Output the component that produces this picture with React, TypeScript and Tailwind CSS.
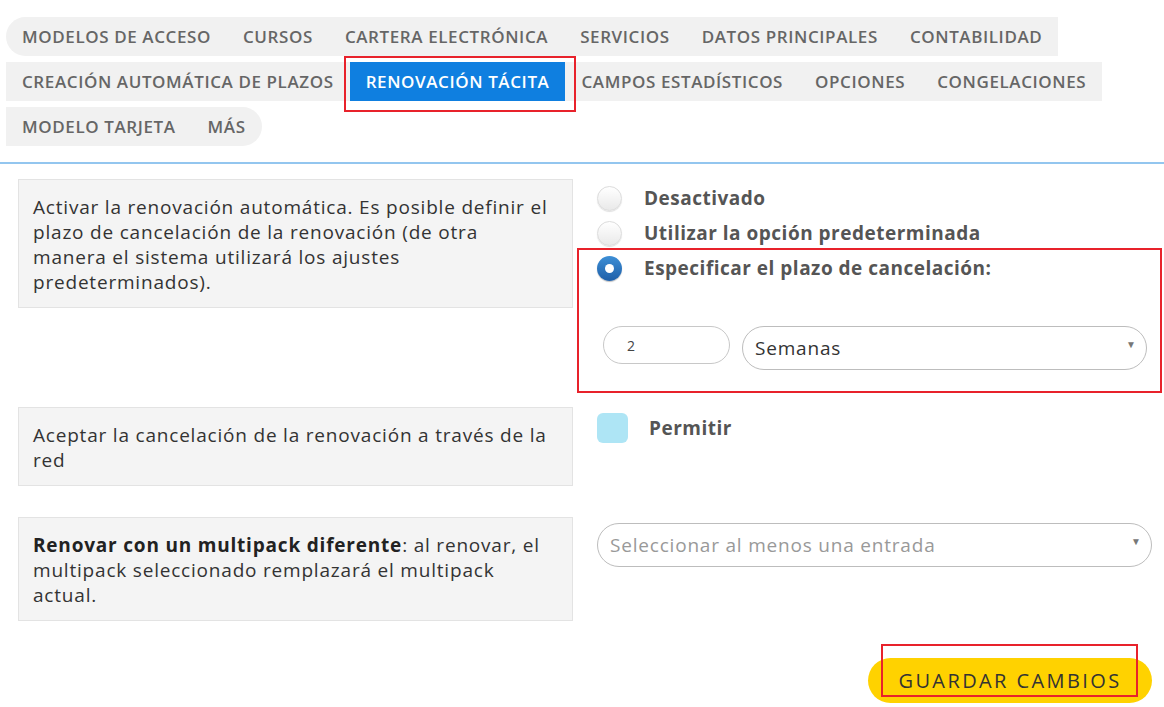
import React from 'react'

const font = { fontFamily: '"Open Sans", "Liberation Sans", sans-serif' }

const rows: { label: string; active?: boolean }[][] = [
  [{ label: 'Modelos de acceso' }, { label: 'Cursos' }, { label: 'Cartera electrónica' }, { label: 'Servicios' }, { label: 'Datos principales' }, { label: 'Contabilidad' }],
  [{ label: 'Creación automática de plazos' }, { label: 'Renovación tácita', active: true }, { label: 'Campos estadísticos' }, { label: 'Opciones' }, { label: 'Congelaciones' }],
  [{ label: 'Modelo tarjeta' }, { label: 'Más' }],
]

function Radio({ checked }: { checked?: boolean }) {
  if (checked) {
    return (
      <span className="flex h-[25px] w-[25px] shrink-0 items-center justify-center rounded-full bg-gradient-to-b from-[#3d8fd6] to-[#1f5fa8] shadow-[0_1px_1px_rgba(0,0,0,0.25)]">
        <span className="h-[9px] w-[9px] rounded-full bg-white" />
      </span>
    )
  }
  return <span className="block h-[25px] w-[25px] shrink-0 rounded-full border border-[#dcdcdc] bg-gradient-to-b from-white to-[#e9e9e9] shadow-[0_1px_1px_rgba(0,0,0,0.12)]" />
}

function Caret() {
  return <span className="absolute right-[10px] top-[10px] text-[10px] tracking-normal text-[#777]">▼</span>
}

const box = 'border border-[#e3e3e3] bg-[#f4f4f4] pl-[14px] pr-[22px] pb-[12px] pt-[15px] text-[19px] leading-[25px] tracking-[0.8px] text-[#333]'
const option = 'flex items-center gap-[22px] text-[19px] font-bold leading-[26px] tracking-[0.5px] text-[#555]'

export default function App() {
  return (
    <div className="relative h-[707px] w-[1164px] overflow-hidden bg-white" style={font}>
      {/* tabs */}
      <div className="flex flex-col gap-[6px] pl-[6px] pt-[17px]">
        {rows.map((row, ri) => (
          <div key={ri} className="flex">
            <div
              className={
                'flex h-[39px] items-stretch bg-[#f1f1f1] ' +
                (ri === 0 ? 'rounded-l-[20px]' : '') +
                (ri === 2 ? 'rounded-r-[20px]' : '')
              }
            >
              {row.map((t) => (
                <div
                  key={t.label}
                  className={
                    'flex items-center px-4 text-[17px] font-semibold uppercase tracking-[0.6px] ' +
                    (t.active ? 'bg-[#0f7fe0] text-white' : 'text-[#666]')
                  }
                >
                  {t.label}
                </div>
              ))}
            </div>
          </div>
        ))}
      </div>

      <div className="mt-[16px] h-[2px] w-full bg-[#93c6ef]" />

      <div className="pl-[18px] pr-[12px]">
        {/* row 1 */}
        <div className="mt-[15px] grid grid-cols-2 gap-6">
          <div className={'self-start ' + box}>
            Activar la renovación automática. Es posible definir el plazo de cancelación de la renovación (de otra manera el sistema utilizará los ajustes predeterminados).
          </div>
          <div className="pb-[37px] pt-[6px]">
            <div className="flex flex-col gap-[9px]">
              <label className={option}>
                <Radio />
                Desactivado
              </label>
              <label className={option}>
                <Radio />
                Utilizar la opción predeterminada
              </label>
              <label className={option}>
                <Radio checked />
                Especificar el plazo de cancelación:
              </label>
            </div>
            <div className="ml-[6px] mt-[45px] flex items-start gap-[12px]">
              <div className="flex h-[38px] w-[127px] items-center rounded-full border border-[#c8c8c8] pl-[23px] text-[14px] text-[#444]">2</div>
              <div className="relative flex h-[44px] w-[405px] items-center rounded-full border border-[#bdbdbd] pl-[12px] text-[19px] tracking-[0.8px] text-[#333]">
                Semanas
                <Caret />
              </div>
            </div>
          </div>
        </div>

        {/* row 2 */}
        <div className="grid grid-cols-2 gap-6">
          <div className={box}>Aceptar la cancelación de la renovación a través de la red</div>
          <div className="pt-[6px]">
            <label className="flex items-start gap-[21px] text-[19px] font-bold tracking-[0.5px] text-[#555]">
              <span className="block h-[30px] w-[31px] rounded-[6px] bg-[#aee5f5]" />
              <span className="mt-[1px]">Permitir</span>
            </label>
          </div>
        </div>

        {/* row 3 */}
        <div className="mt-[31px] grid grid-cols-2 gap-6">
          <div className={box}>
            <b className="font-bold text-[#222]">Renovar con un multipack diferente</b>: al renovar, el multipack seleccionado remplazará el multipack actual.
          </div>
          <div className="pt-[6px]">
            <div className="relative flex h-[44px] w-full items-center rounded-full border border-[#bdbdbd] pl-[12px] text-[19px] tracking-[0.8px] text-[#999]">
              Seleccionar al menos una entrada
              <Caret />
            </div>
          </div>
        </div>

        <div className="mt-[37px] flex justify-end">
          <button className="h-[45px] w-[284px] rounded-full bg-[#ffd200] text-[20px] font-medium uppercase tracking-[2.4px] text-[#333]">
            Guardar cambios
          </button>
        </div>
      </div>

      {/* annotation boxes */}
      <div className="pointer-events-none absolute left-[344px] top-[56px] h-[56px] w-[232px] border-2 border-[#e8222b]" />
      <div className="pointer-events-none absolute left-[577px] top-[248px] h-[145px] w-[585px] border-2 border-[#e8222b]" />
      <div className="pointer-events-none absolute left-[881px] top-[644px] h-[53px] w-[257px] border-2 border-[#e8222b]" />
    </div>
  )
}
